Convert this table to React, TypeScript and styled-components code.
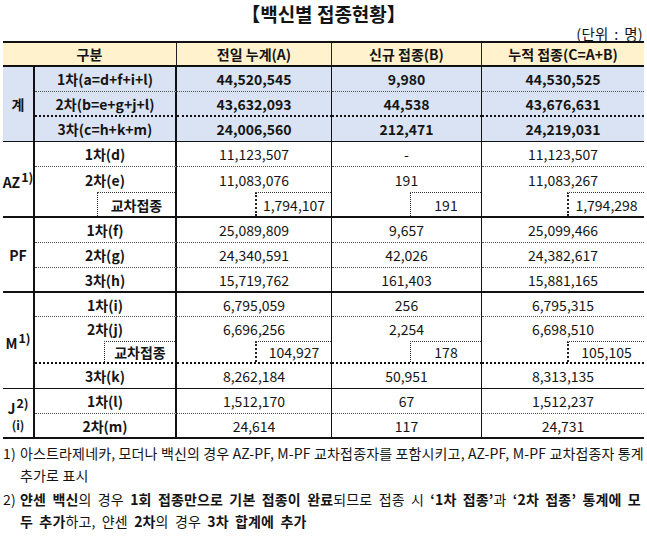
import React from "react";
import styled, { createGlobalStyle, css } from "styled-components";

const GlobalStyle = createGlobalStyle`
  body {
    margin: 0;
    background: #ffffff;
    color: #141414;
    font-family: "Noto Sans CJK KR", "Noto Sans", sans-serif;
  }
`;

type Sep = "dot" | "dotThick" | "none" | "thin" | "thick";

const sepBorder = (sep: Sep) => {
  switch (sep) {
    case "dot":
      return "1px dotted #505050";
    case "dotThick":
      return "2px dotted #111";
    case "thin":
      return "1px solid #111";
    case "thick":
      return "2px solid #111";
    default:
      return "none";
  }
};

const Page = styled.div`
  width: 641px;
  padding: 0 3px;
`;

const Title = styled.div`
  padding-top: 2px;
  text-align: center;
  font-size: 19px;
  line-height: 24px;
  font-weight: 700;
`;

const Unit = styled.div`
  text-align: right;
  font-size: 14.5px;
  line-height: 15px;
  padding-right: 1px;
  letter-spacing: 0.3px;
  word-spacing: 2px;
`;

const Grid = styled.div`
  display: grid;
  grid-template-columns: 32px 142px 155px 150px 162px;
  grid-template-rows: 24px 25px 25px 25px 25px 25px 26px 25px 25px 25px 24px 24px 23px 25px 25px 25px;
  border-top: 2px solid #111;
  font-size: 14px;
  line-height: 18px;
`;

const Cell = styled.div`
  box-sizing: border-box;
  display: flex;
  align-items: center;
  justify-content: center;
  white-space: nowrap;
`;

const HeadCell = styled(Cell)<{ $span?: number; $last?: boolean }>`
  grid-column: span ${(p) => p.$span ?? 1};
  background: #fff2cc;
  font-weight: 700;
  border-bottom: 2px solid #111;
  border-right: ${(p) => (p.$last ? "none" : "1px solid #222")};
`;

const CatCell = styled(Cell)<{ $rows: number; $end: Sep; $blue?: boolean }>`
  grid-row: span ${(p) => p.$rows};
  flex-direction: column;
  font-weight: 700;
  background: ${(p) => (p.$blue ? "#dae3f3" : "transparent")};
  border-right: 2px solid #111;
  border-bottom: ${(p) => sepBorder(p.$end)};
`;

const Sup = styled.span`
  font-size: 12.5px;
  vertical-align: 6px;
  margin-left: 1px;
`;

const SubNote = styled.span`
  font-size: 12px;
  line-height: 16px;
`;

const LabelCell = styled(Cell)<{ $sep: Sep; $blue?: boolean; $cross?: boolean }>`
  font-weight: 700;
  background: ${(p) => (p.$blue ? "#dae3f3" : "transparent")};
  border-right: 2px solid #111;
  border-bottom: ${(p) => sepBorder(p.$sep)};
  ${(p) =>
    p.$cross &&
    css`
      justify-content: flex-end;
      align-items: stretch;
    `}
`;

const NumCell = styled(Cell)<{ $sep: Sep; $blue?: boolean; $last?: boolean; $cross?: boolean }>`
  font-weight: ${(p) => (p.$blue ? 700 : 400)};
  background: ${(p) => (p.$blue ? "#dae3f3" : "transparent")};
  border-right: ${(p) => (p.$last ? "none" : "1px solid #111")};
  border-bottom: ${(p) => sepBorder(p.$sep)};
  ${(p) =>
    p.$cross &&
    css`
      justify-content: flex-end;
      align-items: stretch;
    `}
`;

const CrossBox = styled.div<{ $w: number; $edge: number }>`
  box-sizing: border-box;
  width: ${(p) => p.$w}px;
  display: flex;
  align-items: center;
  justify-content: center;
  border-top: 1px dotted #333;
  border-left: ${(p) => p.$edge}px dotted #222;
`;

const Notes = styled.div`
  padding-top: 3px;
  font-size: 14px;
  line-height: 22px;
  letter-spacing: 0.15px;
`;

const Note = styled.div<{ $wide?: boolean }>`
  display: flex;
  word-spacing: ${(p) => (p.$wide ? "3px" : "0")};
  & + & {
    margin-top: 2px;
  }
`;

const Marker = styled.span`
  flex: 0 0 17px;
`;

const NoteText = styled.span`
  white-space: nowrap;
`;

const B = styled.b`
  font-weight: 700;
`;

type Row = {
  label: string;
  a: string;
  b: string;
  c: string;
  sep: Sep;
  cross?: boolean;
};

type Group = {
  name: string;
  sup?: string;
  sub?: string;
  blue?: boolean;
  end: Sep;
  labelBox?: number;
  rows: Row[];
};

const groups: Group[] = [
  {
    name: "계",
    blue: true,
    end: "thin",
    rows: [
      { label: "1차(a=d+f+i+l)", a: "44,520,545", b: "9,980", c: "44,530,525", sep: "dot" },
      { label: "2차(b=e+g+j+l)", a: "43,632,093", b: "44,538", c: "43,676,631", sep: "dotThick" },
      { label: "3차(c=h+k+m)", a: "24,006,560", b: "212,471", c: "24,219,031", sep: "thin" },
    ],
  },
  {
    name: "AZ",
    sup: "1)",
    end: "thick",
    labelBox: 78,
    rows: [
      { label: "1차(d)", a: "11,123,507", b: "-", c: "11,123,507", sep: "dot" },
      { label: "2차(e)", a: "11,083,076", b: "191", c: "11,083,267", sep: "none" },
      { label: "교차접종", a: "1,794,107", b: "191", c: "1,794,298", sep: "thick", cross: true },
    ],
  },
  {
    name: "PF",
    end: "thick",
    rows: [
      { label: "1차(f)", a: "25,089,809", b: "9,657", c: "25,099,466", sep: "dot" },
      { label: "2차(g)", a: "24,340,591", b: "42,026", c: "24,382,617", sep: "dot" },
      { label: "3차(h)", a: "15,719,762", b: "161,403", c: "15,881,165", sep: "thick" },
    ],
  },
  {
    name: "M",
    sup: "1)",
    end: "thin",
    labelBox: 71,
    rows: [
      { label: "1차(i)", a: "6,795,059", b: "256", c: "6,795,315", sep: "dot" },
      { label: "2차(j)", a: "6,696,256", b: "2,254", c: "6,698,510", sep: "none" },
      { label: "교차접종", a: "104,927", b: "178", c: "105,105", sep: "dotThick", cross: true },
      { label: "3차(k)", a: "8,262,184", b: "50,951", c: "8,313,135", sep: "thin" },
    ],
  },
  {
    name: "J",
    sup: "2)",
    sub: "(i)",
    end: "thick",
    rows: [
      { label: "1차(l)", a: "1,512,170", b: "67", c: "1,512,237", sep: "dot" },
      { label: "2차(m)", a: "24,614", b: "117", c: "24,731", sep: "thick" },
    ],
  },
];

// width and left-edge weight of the dotted sub box in each value column
const crossBoxes = [
  { w: 76, edge: 2 },
  { w: 71, edge: 1 },
  { w: 77, edge: 2 },
];

export default function App() {
  return (
    <Page>
      <GlobalStyle />
      <Title>【백신별 접종현황】</Title>
      <Unit>(단위 : 명)</Unit>
      <Grid>
        <HeadCell $span={2}>구분</HeadCell>
        <HeadCell>전일 누계(A)</HeadCell>
        <HeadCell>신규 접종(B)</HeadCell>
        <HeadCell $last>누적 접종(C=A+B)</HeadCell>
        {groups.map((g) => (
          <React.Fragment key={g.name}>
            <CatCell $rows={g.rows.length} $end={g.end} $blue={g.blue}>
              <span>
                {g.name}
                {g.sup && <Sup>{g.sup}</Sup>}
              </span>
              {g.sub && <SubNote>{g.sub}</SubNote>}
            </CatCell>
            {g.rows.map((r) => {
              const vals = [r.a, r.b, r.c];
              return (
                <React.Fragment key={r.label}>
                  <LabelCell $sep={r.sep} $blue={g.blue} $cross={r.cross}>
                    {r.cross ? (
                      <CrossBox $w={g.labelBox ?? 78} $edge={1}>
                        {r.label}
                      </CrossBox>
                    ) : (
                      r.label
                    )}
                  </LabelCell>
                  {vals.map((v, i) => (
                    <NumCell
                      key={i}
                      $sep={r.sep}
                      $blue={g.blue}
                      $last={i === 2}
                      $cross={r.cross}
                    >
                      {r.cross ? (
                        <CrossBox $w={crossBoxes[i].w} $edge={crossBoxes[i].edge}>
                          {v}
                        </CrossBox>
                      ) : (
                        v
                      )}
                    </NumCell>
                  ))}
                </React.Fragment>
              );
            })}
          </React.Fragment>
        ))}
      </Grid>
      <Notes>
        <Note>
          <Marker>1)</Marker>
          <NoteText>
            아스트라제네카, 모더나 백신의 경우 AZ-PF, M-PF 교차접종자를 포함시키고, AZ-PF, M-PF 교차접종자 통계
            <br />
            추가로 표시
          </NoteText>
        </Note>
        <Note $wide>
          <Marker>2)</Marker>
          <NoteText>
            <B>얀센 백신</B>의 경우 <B>1회 접종만으로 기본 접종이 완료</B>되므로 접종 시 <B>‘1차 접종’</B>과{" "}
            <B>‘2차 접종’ 통계에 모</B>
            <br />
            <B>두 추가</B>하고, 얀센 <B>2차</B>의 경우 <B>3차 합계에 추가</B>
          </NoteText>
        </Note>
      </Notes>
    </Page>
  );
}
